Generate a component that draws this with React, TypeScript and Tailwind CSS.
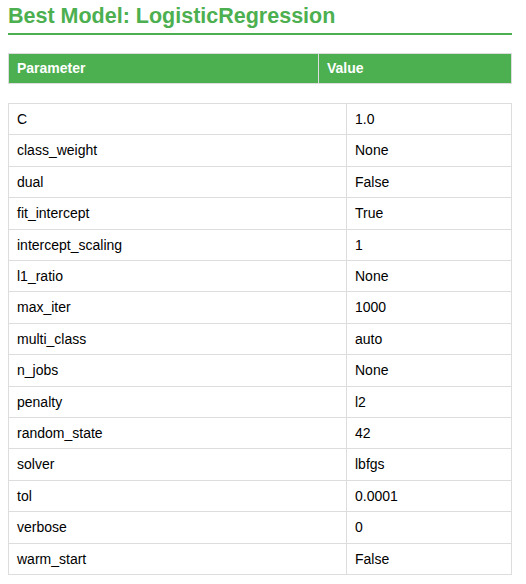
const params: [string, string][] = [
  ["C", "1.0"],
  ["class_weight", "None"],
  ["dual", "False"],
  ["fit_intercept", "True"],
  ["intercept_scaling", "1"],
  ["l1_ratio", "None"],
  ["max_iter", "1000"],
  ["multi_class", "auto"],
  ["n_jobs", "None"],
  ["penalty", "l2"],
  ["random_state", "42"],
  ["solver", "lbfgs"],
  ["tol", "0.0001"],
  ["verbose", "0"],
  ["warm_start", "False"],
]

export default function App() {
  return (
    <main
      className="min-h-screen bg-white pl-2 text-[14px] text-black"
      style={{ fontFamily: '"Liberation Sans", Arial, Helvetica, sans-serif' }}
    >
      <div className="w-[504px]">
        {/* Title */}
        <h2 className="pt-[4px] pb-[4px] text-[21.5px] leading-[25px] font-bold text-[#4CAF50] border-b-2 border-[#4CAF50]">
          Best Model: LogisticRegression
        </h2>

        {/* Header table */}
        <table className="mt-[18px] w-full border-collapse">
          <thead>
            <tr className="bg-[#4CAF50] text-white">
              <th className="w-[310px] border border-[#ddd] px-2 py-[7px] text-left font-bold leading-[15.3px]">
                Parameter
              </th>
              <th className="border border-[#ddd] px-2 py-[7px] text-left font-bold leading-[15.3px]">
                Value
              </th>
            </tr>
          </thead>
        </table>

        {/* Values */}
        <table className="mt-[18.7px] w-full border-collapse">
          <tbody>
            {params.map(([name, value]) => (
              <tr key={name}>
                <td className="w-[338px] border border-[#ddd] px-2 py-[7px] leading-[16.4px]">{name}</td>
                <td className="border border-[#ddd] px-2 py-[7px] leading-[16.4px]">{value}</td>
              </tr>
            ))}
          </tbody>
        </table>
      </div>
    </main>
  )
}
